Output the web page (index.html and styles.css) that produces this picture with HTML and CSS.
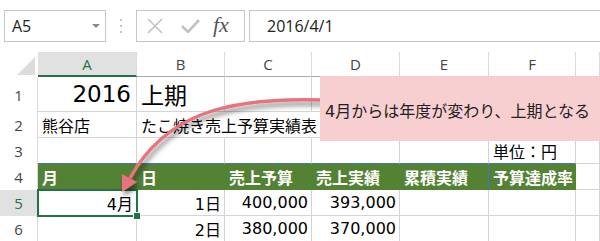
FILE: index.html
```html
<!DOCTYPE html>
<html lang="ja">
  <head>
    <meta charset="UTF-8" />
    <title>Excel</title>
    <link rel="stylesheet" href="styles.css">
  </head>
  <body>
    <div class="page">
      <div class="toolbar">
        <div class="namebox">
          <span>A5</span>
          <svg class="drop" width="8" height="4" viewBox="0 0 8 4"><polygon points="0,0 8,0 4,4" fill="#8a8a8a"/></svg>
        </div>
        <div class="grip"><i></i><i></i><i></i></div>
        <div class="fbtns">
          <svg class="ico-x" width="16" height="16" viewBox="0 0 16 16"><path d="M1,1 L15,15 M15,1 L1,15" stroke="#c2c2c2" stroke-width="1.6" fill="none"/></svg>
          <svg class="ico-ok" width="19" height="14" viewBox="0 0 19 14"><polyline points="1,7 7,13 18,1" stroke="#c2c2c2" stroke-width="2.6" fill="none"/></svg>
          <span class="fx">fx</span>
        </div>
        <div class="finput">2016/4/1</div>
      </div>

      <div class="grid">
        <div class="corner"><svg width="38" height="25" viewBox="0 0 38 25"><polygon points="35,5 35,23 17,23" fill="#dcdcdc"/></svg></div>
        <div class="ch sel">A</div>
        <div class="ch">B</div>
        <div class="ch">C</div>
        <div class="ch">D</div>
        <div class="ch">E</div>
        <div class="ch">F</div>
        <div class="ch"></div>

        <div class="rh">1</div>
        <div class="r big">2016</div>
        <div class="big">上期</div>
        <div></div><div></div><div></div><div></div><div></div>

        <div class="rh">2</div>
        <div>熊谷店</div>
        <div class="noline">たこ焼き売上予算実績表</div>
        <div class="noline"></div>
        <div></div><div></div><div></div><div></div>

        <div class="rh">3</div>
        <div class="tb"></div>
        <div class="tb"></div>
        <div class="tb"></div>
        <div class="tb"></div>
        <div class="tb"></div>
        <div class="tb">単位：円</div>
        <div></div>

        <div class="rh">4</div>
        <div class="hd">月</div>
        <div class="hd">日</div>
        <div class="hd">売上予算</div>
        <div class="hd">売上実績</div>
        <div class="hd edge">累積実績</div>
        <div class="hd">予算達成率</div>
        <div></div>

        <div class="rh sel">5</div>
        <div class="r">4月</div>
        <div class="r">1日</div>
        <div class="r">400,000</div>
        <div class="r">393,000</div>
        <div></div><div></div><div></div>

        <div class="rh">6</div>
        <div></div>
        <div class="r">2日</div>
        <div class="r">380,000</div>
        <div class="r">370,000</div>
        <div></div><div></div><div></div>
      </div>

      <!-- выделение A5 -->
      <div class="selbox"></div>
      <div class="handle"></div>

      <svg class="arrow" width="600" height="241" viewBox="0 0 600 241">
        <defs>
          <filter id="sh" x="-20%" y="-20%" width="140%" height="140%">
            <feDropShadow dx="2" dy="4" stdDeviation="2.4" flood-color="#000" flood-opacity="0.5"/>
          </filter>
        </defs>
        <g filter="url(#sh)">
          <path d="M322,100 C225,97 165,115 130,178" fill="none" stroke="#e8737b" stroke-width="3.4"/>
          <polygon points="122,192 137,182 122,174" fill="#e8737b"/>
        </g>
      </svg>

      <div class="callout">4月からは年度が変わり、上期となる</div>
    </div>
  </body>
</html>
```

FILE: styles.css
```css
body {
  margin: 0;
  background: #fff;
}

.page {
  position: relative;
  width: 600px;
  height: 241px;
  overflow: hidden;
  font-family: "DejaVu Sans", "Noto Sans CJK JP", sans-serif;
  color: #000;
}

/* строка формул */
.toolbar {
  display: flex;
  align-items: flex-start;
  height: 52px;
  box-sizing: border-box;
  padding: 10px 0 0 4px;
  font-family: "Open Sans", sans-serif;
  color: #222;
}

.namebox {
  width: 102px;
  height: 32px;
  box-sizing: border-box;
  border: 1px solid #c6c6c6;
  display: flex;
  align-items: center;
  justify-content: space-between;
  padding: 0 5px 0 7px;
  font-size: 16px;
}

.grip {
  width: 30px;
  height: 32px;
  display: flex;
  flex-direction: column;
  align-items: center;
  justify-content: center;
  gap: 4px;
}

.grip i {
  display: block;
  width: 2px;
  height: 2px;
  background: #c4c4c4;
}

.fbtns {
  width: 109px;
  height: 32px;
  box-sizing: border-box;
  border: 1px solid #c6c6c6;
  display: flex;
  align-items: center;
}

.ico-x {
  margin-left: 10px;
}

.ico-ok {
  margin-left: 18px;
}

.fx {
  margin-left: 13px;
  font-family: "Liberation Serif", serif;
  font-style: italic;
  font-size: 22px;
  color: #555;
  line-height: 1;
  margin-top: -2px;
}

.finput {
  flex: 1;
  height: 32px;
  margin-left: 4px;
  box-sizing: border-box;
  border: 1px solid #c6c6c6;
  border-right: none;
  padding-left: 17px;
  font-size: 16px;
  line-height: 30px;
}

/* лист */
.grid {
  display: grid;
  grid-template-columns: 38px 99px 88px 87px 88px 89px 87px 1fr;
  grid-template-rows: 25px 35px 26px 26px 26px 26px 26px;
}

.grid > div {
  box-sizing: border-box;
  border-right: 1px solid #d4d4d4;
  border-bottom: 1px solid #d4d4d4;
  display: flex;
  align-items: center;
  padding: 0 4px;
  white-space: nowrap;
  font-size: 16px;
  min-width: 0;
}

.grid > .corner {
  border: none;
  padding: 0;
}

.grid > .ch {
  justify-content: center;
  font-family: "Open Sans", sans-serif;
  font-size: 15px;
  color: #444;
  border-right-color: #dadada;
  border-bottom-color: #ababab;
}

.grid > .ch.sel {
  background: #e1e1e1;
  color: #217346;
  border-bottom: 2px solid #217346;
}

.grid > .rh {
  justify-content: center;
  font-family: "Open Sans", sans-serif;
  font-size: 15px;
  color: #444;
  border-bottom: none;
  border-right-color: #dadada;
}

.grid > .rh.sel {
  background: #e1e1e1;
  color: #217346;
}

.grid > .r {
  justify-content: flex-end;
  padding-right: 3px;
}

.grid > .big {
  font-size: 23px;
}

.grid > .r.big {
  padding-right: 5px;
}

.grid > .noline {
  border-right-color: transparent;
}

.grid > .tb {
  border-bottom-color: #4472c4;
}

.grid > .hd {
  background: #548235;
  color: #fff;
  font-weight: bold;
  border-right-color: #548235;
  border-bottom-color: #548235;
}

.grid > .hd.edge {
  border-right-color: #4472c4;
}

/* поверх листа */
.selbox {
  position: absolute;
  left: 37px;
  top: 189px;
  width: 101px;
  height: 28px;
  box-sizing: border-box;
  border: 2px solid #217346;
}

.handle {
  position: absolute;
  left: 134px;
  top: 213px;
  width: 6px;
  height: 6px;
  background: #217346;
  box-shadow: 0 0 0 1px #fff;
}

.arrow {
  position: absolute;
  left: 0;
  top: 0;
  pointer-events: none;
}

.callout {
  position: absolute;
  left: 320px;
  top: 76px;
  width: 290px;
  height: 65px;
  box-sizing: border-box;
  background: #f8cfd0;
  display: flex;
  align-items: center;
  padding: 3px 0 0 5px;
  font-size: 16px;
  color: #222;
  white-space: nowrap;
}
```
